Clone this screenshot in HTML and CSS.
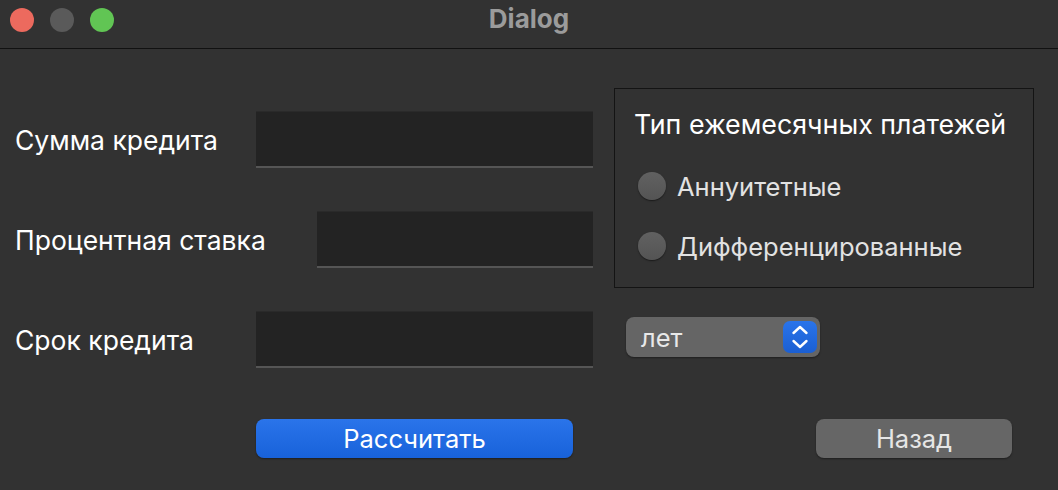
FILE: index.html
```html
<!DOCTYPE html>
<html lang="ru">
<head>
<meta charset="utf-8">
<title>Dialog</title>
<link rel="stylesheet" href="styles.css">
</head>
<body>
<div class="window">
  <div class="titlebar">
    <div class="lights">
      <span class="light red"></span>
      <span class="light gray"></span>
      <span class="light green"></span>
    </div>
    <div class="title">Dialog</div>
  </div>
  <div class="content">
    <div class="columns">
      <div class="left">
        <div class="row">
          <label class="label">Сумма кредита</label>
          <div class="input w-wide"></div>
        </div>
        <div class="row">
          <label class="label">Процентная ставка</label>
          <div class="input w-narrow"></div>
        </div>
        <div class="row">
          <label class="label">Срок кредита</label>
          <div class="input w-wide"></div>
        </div>
      </div>
      <div class="right">
        <fieldset class="group">
          <div class="group-title">Тип ежемесячных платежей</div>
          <div class="radio"><span class="dot"></span><span class="radio-label">Аннуитетные</span></div>
          <div class="radio"><span class="dot"></span><span class="radio-label">Дифференцированные</span></div>
        </fieldset>
        <div class="combo">
          <span class="combo-text">лет</span>
          <span class="stepper">
            <svg width="34" height="32" viewBox="0 0 34 32">
              <path d="M10.5 12 L17 6 L23.5 12" fill="none" stroke="#fff" stroke-width="2.4" stroke-linecap="round" stroke-linejoin="round"/>
              <path d="M10.5 20 L17 26 L23.5 20" fill="none" stroke="#fff" stroke-width="2.4" stroke-linecap="round" stroke-linejoin="round"/>
            </svg>
          </span>
        </div>
      </div>
    </div>
    <div class="buttons">
      <button class="btn primary">Рассчитать</button>
      <button class="btn secondary">Назад</button>
    </div>
  </div>
</div>
</body>
</html>
```
FILE: styles.css
```css
* { box-sizing: border-box; }
html, body {
  margin: 0;
  padding: 0;
  background: #323232;
  font-family: "Inter", "Noto Sans", "Liberation Sans", sans-serif;
}
.window {
  width: 1058px;
  height: 490px;
  background: #323232;
}
.titlebar {
  height: 49px;
  border-bottom: 1px solid #111;
  display: flex;
  align-items: flex-start;
  position: relative;
}
.lights {
  display: flex;
  gap: 16px;
  padding: 8px 0 0 10px;
}
.light {
  width: 24px;
  height: 24px;
  border-radius: 50%;
  display: block;
}
.light.red { background: #ec6a5e; }
.light.gray { background: #5a5a5a; }
.light.green { background: #61c554; }
.title {
  position: absolute;
  left: 0;
  right: 0;
  top: 3px;
  text-align: center;
  font-weight: 700;
  font-size: 26px;
  color: #9b9b9b;
}
.content {
  padding-left: 15px;
}
.columns {
  display: flex;
}
.left {
  width: 578px;
  padding-top: 62px;
  display: flex;
  flex-direction: column;
  gap: 43px;
}
.row {
  display: flex;
  justify-content: space-between;
  align-items: center;
  height: 57px;
}
.label {
  color: #fff;
  font-size: 26.5px;
}
.input {
  height: 57px;
  background: #232323;
  border-top: 1px solid #2a2a2a;
  border-bottom: 2px solid #555;
}
.w-wide { width: 337px; }
.w-narrow { width: 276px; }
.right {
  margin-left: 21px;
  padding-top: 39px;
}
.group {
  margin: 0;
  width: 420px;
  height: 200px;
  border: 1px solid #141414;
  padding: 19px 0 0 23px;
}
.group-title {
  color: #fff;
  font-size: 26.8px;
  margin-left: -4px;
  line-height: 32px;
}
.radio {
  display: flex;
  align-items: center;
  margin-top: 24px;
  height: 44px;
}
.radio + .radio { margin-top: 16px; }
.dot {
  width: 28px;
  height: 28px;
  border-radius: 50%;
  background: linear-gradient(#616161, #545454);
  box-shadow: 0 1px 1.5px rgba(0,0,0,0.5);
  flex: none;
}
.radio-label {
  margin-left: 11px;
  color: #e2e2e2;
  font-size: 25.5px;
}
.combo {
  margin: 29px 0 0 12px;
  width: 194px;
  height: 40px;
  border-radius: 8px;
  background: #656565;
  box-shadow: 0 1px 2px rgba(0,0,0,0.4);
  display: flex;
  align-items: center;
  justify-content: space-between;
  padding: 0 3px 0 15px;
}
.combo-text {
  color: #e8e8e8;
  font-size: 25.5px;
}
.stepper {
  width: 34px;
  height: 32px;
  border-radius: 7px;
  background: linear-gradient(#2a74ea, #1b5fd2);
  display: block;
}
.stepper svg { display: block; }
.buttons {
  display: flex;
  margin-top: 51px;
  padding-left: 241px;
}
.btn {
  height: 39px;
  border: none;
  border-radius: 8px;
  font-family: inherit;
  font-size: 25.5px;
  line-height: 39px;
  padding: 0;
  box-shadow: 0 1px 2px rgba(0,0,0,0.4);
}
.primary {
  width: 317px;
  background: linear-gradient(#2a74ea, #1862da);
  color: #fff;
}
.secondary {
  width: 196px;
  margin-left: 243px;
  background: #666;
  color: #e6e6e6;
}
```
